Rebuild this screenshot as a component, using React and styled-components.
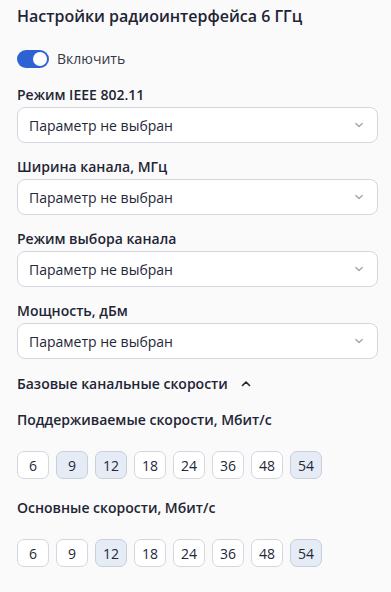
import React, { useState } from "react";
import styled, { createGlobalStyle } from "styled-components";

const GlobalStyle = createGlobalStyle`
  body {
    margin: 0;
    background: #fafafa;
  }
  body, body * {
    font-family: "Open Sans", "Noto Sans", sans-serif;
  }
`;

const supported = [
  { v: 6, on: false },
  { v: 9, on: true },
  { v: 12, on: true },
  { v: 18, on: false },
  { v: 24, on: false },
  { v: 36, on: false },
  { v: 48, on: false },
  { v: 54, on: true },
];

const basic = [
  { v: 6, on: false },
  { v: 9, on: false },
  { v: 12, on: true },
  { v: 18, on: false },
  { v: 24, on: false },
  { v: 36, on: false },
  { v: 48, on: false },
  { v: 54, on: true },
];

const fields = [
  "Режим IEEE 802.11",
  "Ширина канала, МГц",
  "Режим выбора канала",
  "Мощность, дБм",
];

function Chevron({ up, weight = 1.6 }) {
  return (
    <svg width="10" height="10" viewBox="0 0 10 10">
      <path
        d={up ? "M1.5 6.5 L5 3 L8.5 6.5" : "M1.8 3.6 L5 6.6 L8.2 3.6"}
        fill="none"
        stroke="currentColor"
        strokeWidth={weight}
        strokeLinecap="round"
        strokeLinejoin="round"
      />
    </svg>
  );
}

function App() {
  const [enabled, setEnabled] = useState(true);
  return (
    <>
      <GlobalStyle />
      <Page>
        <Title>Настройки радиоинтерфейса 6 ГГц</Title>
        <ToggleRow onClick={() => setEnabled(!enabled)}>
          <Toggle on={enabled}>
            <Knob on={enabled} />
          </Toggle>
          <ToggleLabel>Включить</ToggleLabel>
        </ToggleRow>

        {fields.map((f) => (
          <Field key={f}>
            <Label>{f}</Label>
            <Select>
              <span>Параметр не выбран</span>
              <Arrow>
                <Chevron weight={1.4} />
              </Arrow>
            </Select>
          </Field>
        ))}

        <Collapse>
          Базовые канальные скорости
          <CollapseIcon>
            <Chevron up />
          </CollapseIcon>
        </Collapse>

        <RateLabel>Поддерживаемые скорости, Мбит/с</RateLabel>
        <Chips>
          {supported.map((c) => (
            <Chip key={c.v} on={c.on}>
              {c.v}
            </Chip>
          ))}
        </Chips>

        <RateLabel>Основные скорости, Мбит/с</RateLabel>
        <Chips>
          {basic.map((c) => (
            <Chip key={c.v} on={c.on}>
              {c.v}
            </Chip>
          ))}
        </Chips>
      </Page>
    </>
  );
}

const Page = styled.div`
  padding: 5px 13px 20px 17px;
  display: flex;
  flex-direction: column;
  color: #1f2535;
`;

const Title = styled.h1`
  margin: 0;
  font-size: 16px;
  font-weight: 600;
  line-height: 22px;
  color: #1f2535;
`;

const ToggleRow = styled.div`
  display: flex;
  align-items: center;
  gap: 8px;
  height: 18px;
  margin-top: 23px;
  margin-bottom: 3px;
  cursor: pointer;
`;

const Toggle = styled.div`
  width: 32px;
  height: 18px;
  border-radius: 9px;
  background: ${({ on }) => (on ? "#2e62d4" : "#c5cad3")};
  position: relative;
`;

const Knob = styled.div`
  position: absolute;
  top: 2px;
  left: ${({ on }) => (on ? "16px" : "2px")};
  width: 14px;
  height: 14px;
  border-radius: 50%;
  background: #fff;
`;

const ToggleLabel = styled.span`
  font-size: 14px;
  line-height: 18px;
  color: #333846;
`;

const Field = styled.div`
  display: flex;
  flex-direction: column;
`;

const Label = styled.div`
  font-size: 14px;
  font-weight: 600;
  line-height: 20px;
  margin-top: 14px;
  margin-bottom: 2px;
`;

const Select = styled.div`
  height: 36px;
  box-sizing: border-box;
  border: 1px solid #d4d7df;
  border-radius: 8px;
  background: #fff;
  display: flex;
  align-items: center;
  justify-content: space-between;
  padding: 0 13px 0 11px;
  font-size: 14px;
  color: #232838;
`;

const Arrow = styled.span`
  display: flex;
  color: #a2a6b1;
`;

const Collapse = styled.div`
  display: flex;
  align-items: center;
  gap: 13px;
  font-size: 14px;
  font-weight: 600;
  line-height: 20px;
  margin-top: 15px;
`;

const CollapseIcon = styled.span`
  display: flex;
  color: #1f2535;
`;

const RateLabel = styled(Label)`
  margin-top: 16px;
  margin-bottom: 0;
`;

const Chips = styled.div`
  display: flex;
  gap: 7px;
  margin-top: 21px;
  margin-bottom: 3px;
`;

const Chip = styled.div`
  width: 32px;
  height: 28px;
  box-sizing: border-box;
  border: 1px solid ${({ on }) => (on ? "#c9cfd9" : "#d4d7df")};
  border-radius: 7px;
  background: ${({ on }) => (on ? "#e6ecf5" : "#fff")};
  display: flex;
  align-items: center;
  justify-content: center;
  font-size: 14px;
  color: #232838;
`;

export default App;
